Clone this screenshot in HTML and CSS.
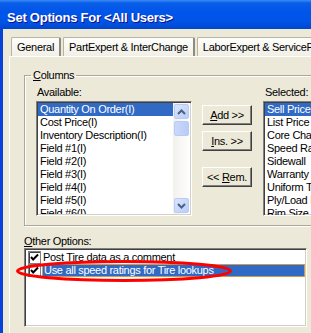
FILE: index.html
```html
<!DOCTYPE html>
<html lang="en">
<head>
  <meta charset="UTF-8">
  <title>Set Options For &lt;All Users&gt;</title>
  <link rel="stylesheet" href="styles.css">
</head>
<body>
  <div class="window">
    <div class="titlebar">Set Options For &lt;All Users&gt;</div>
    <div class="frame">
      <div class="tabs">
        <div class="tab">General</div>
        <div class="tab">PartExpert &amp; InterChange</div>
        <div class="tab">LaborExpert &amp; ServicePlus</div>
      </div>
      <div class="panel">
        <fieldset class="group">
          <legend><u>C</u>olumns</legend>
          <div class="columns">
            <div class="col-left">
              <div class="label">Available:</div>
              <div class="listbox avail">
                <div class="items">
                  <div class="item selected">Quantity On Order(I)</div>
                  <div class="item">Cost Price(I)</div>
                  <div class="item">Inventory Description(I)</div>
                  <div class="item">Field #1(I)</div>
                  <div class="item">Field #2(I)</div>
                  <div class="item">Field #3(I)</div>
                  <div class="item">Field #4(I)</div>
                  <div class="item">Field #5(I)</div>
                  <div class="item">Field #6(I)</div>
                </div>
                <div class="scrollbar">
                  <div class="sb-btn">
                    <svg width="9" height="6" viewBox="0 0 9 6"><polyline points="1,5 4.5,1.5 8,5" fill="none" stroke="#4d6185" stroke-width="2"/></svg>
                  </div>
                  <div class="sb-thumb"></div>
                  <div class="sb-track"></div>
                  <div class="sb-btn">
                    <svg width="9" height="6" viewBox="0 0 9 6"><polyline points="1,1 4.5,4.5 8,1" fill="none" stroke="#4d6185" stroke-width="2"/></svg>
                  </div>
                </div>
              </div>
            </div>
            <div class="col-buttons">
              <button class="btn"><u>A</u>dd &gt;&gt;</button>
              <button class="btn"><u>I</u>ns. &gt;&gt;</button>
              <button class="btn rem">&lt;&lt; <u>R</u>em.</button>
            </div>
            <div class="col-right">
              <div class="label sel">Selected:</div>
              <div class="listbox chosen">
                <div class="items">
                  <div class="item selected">Sell Price</div>
                  <div class="item">List Price</div>
                  <div class="item">Core Charge</div>
                  <div class="item">Speed Rating</div>
                  <div class="item">Sidewall</div>
                  <div class="item">Warranty</div>
                  <div class="item">Uniform Tread</div>
                  <div class="item">Ply/Load Range</div>
                  <div class="item">Rim Size</div>
                </div>
              </div>
            </div>
          </div>
        </fieldset>

        <div class="label other"><u>O</u>ther Options:</div>
        <div class="listbox options">
          <div class="option">
            <svg class="check" width="13" height="13" viewBox="0 0 13 13"><rect x="0.5" y="0.5" width="12" height="12" fill="#fff" stroke="#808080"/><path d="M1.5 12V1.5H12" fill="none" stroke="#404040"/><polyline points="3,6 5.2,8.5 10,3.5" fill="none" stroke="#000" stroke-width="2"/></svg>
            <span class="opt-text">Post Tire data as a comment</span>
          </div>
          <div class="option">
            <svg class="check" width="13" height="13" viewBox="0 0 13 13"><rect x="0.5" y="0.5" width="12" height="12" fill="#fff" stroke="#808080"/><path d="M1.5 12V1.5H12" fill="none" stroke="#404040"/><polyline points="3,6 5.2,8.5 10,3.5" fill="none" stroke="#000" stroke-width="2"/></svg>
            <span class="opt-text selected">Use all speed ratings for Tire lookups</span>
          </div>
        </div>

        <svg class="circle" width="220" height="28" viewBox="0 0 220 28">
          <ellipse cx="110" cy="15" rx="106.5" ry="9.5" fill="none" stroke="#f00" stroke-width="3"/>
        </svg>
      </div>
    </div>
  </div>
</body>
</html>
```

FILE: styles.css
```css
body {
  margin: 0;
  width: 311px;
  height: 333px;
  overflow: hidden;
  font-family: 'Liberation Sans', Arial, sans-serif;
  font-size: 11px;
  letter-spacing: -0.3px;
  color: #000;
  background-color: #ece9d8;
}

.window {
  width: 340px;
  height: 333px;
}

.titlebar {
  box-sizing: border-box;
  height: 29px;
  padding: 8px 0 0 7px;
  line-height: 19px;
  font-size: 13px;
  font-weight: bold;
  letter-spacing: -0.25px;
  color: #fff;
  text-shadow: 1px 1px #0f1089;
  background: linear-gradient(#3a8cf7 0, #0a5ee8 3px, #0055ea 12px, #0053e6 22px, #0148d0 28px);
}

.frame {
  box-sizing: border-box;
  height: 304px;
  border-left: 3px solid #0842d9;
  padding: 8px 0 0 6px;
  background-color: #ece9d8;
}

.tabs {
  display: flex;
  gap: 2px;
  margin-left: 2px;
  height: 19px;
}

.tab {
  box-sizing: border-box;
  height: 19px;
  padding: 0 5px;
  line-height: 18px;
  white-space: nowrap;
  border: 1px solid #b8b4a4;
  border-bottom: none;
  border-right: 2px solid #8e8b80;
  border-radius: 2px 2px 0 0;
  background: linear-gradient(#fdfdfb, #f1efe6);
}

.panel {
  position: relative;
  height: 276px;
  border-top: 1px solid #fff;
  border-left: 1px solid #fff;
  padding: 12px 0 0 14px;
}

.group {
  margin: 0;
  width: 320px;
  padding: 4px 0 9px 11px;
  border: 1px solid #aca899;
  box-shadow: inset 1px 1px #fff, 1px 1px #fff;
}

.group legend {
  margin-left: -5px;
  padding: 0 2px;
  line-height: 13px;
}

.columns {
  display: flex;
}

.label {
  line-height: 13px;
  padding-left: 1px;
  margin-bottom: 2px;
}

.label.sel {
  padding-left: 2px;
}

.listbox {
  box-sizing: border-box;
  border: 1px solid;
  border-color: #808080 #fff #fff #808080;
  box-shadow: inset 1px 1px #404040, inset -1px -1px #d4d0c8;
  padding: 1px;
  background-color: #fff;
  overflow: hidden;
}

.avail {
  display: flex;
  width: 156px;
  height: 115px;
}

.avail .items {
  width: 135px;
}

.chosen {
  width: 70px;
  height: 115px;
}

.items {
  overflow: hidden;
}

.item {
  height: 13px;
  line-height: 13px;
  padding-left: 2px;
  white-space: nowrap;
}

.item.selected {
  background-color: #316ac5;
  color: #fff;
}

.scrollbar {
  width: 17px;
  display: flex;
  flex-direction: column;
  align-items: center;
  background: linear-gradient(90deg, #f3f1ec, #fefefe);
}

.sb-btn {
  box-sizing: border-box;
  width: 15px;
  height: 15px;
  margin: 1px 0;
  display: flex;
  align-items: center;
  justify-content: center;
  border: 1px solid #b7cbf3;
  border-radius: 2px;
  background: linear-gradient(135deg, #dbe6fd, #b9cdf8);
}

.sb-thumb {
  box-sizing: border-box;
  width: 15px;
  height: 15px;
  margin-top: 1px;
  border: 1px solid #b7cbf3;
  border-radius: 2px;
  background: linear-gradient(90deg, #c9d8fc, #bacbf6);
}

.sb-track {
  flex: 1;
}

.col-buttons {
  display: flex;
  flex-direction: column;
  margin: 19px 0 0 10px;
  width: 50px;
}

.btn {
  box-sizing: border-box;
  width: 50px;
  height: 20px;
  margin: 0 0 6px;
  padding: 0;
  font-family: inherit;
  font-size: 11px;
  letter-spacing: -0.3px;
  color: #000;
  border: 1px solid;
  border-color: #fff #404040 #404040 #fff;
  box-shadow: inset -1px -1px #808080;
  background-color: #ece9d8;
}

.btn.rem {
  margin-top: 10px;
}

.col-right {
  margin-left: 11px;
}

.other {
  margin: 9px 0 0;
  padding-left: 0;
}

.options {
  width: 283px;
  height: 79px;
  padding: 2px 1px;
}

.option {
  display: flex;
  align-items: center;
  height: 13px;
  line-height: 13px;
}

.check {
  margin: 0 1px 0 2px;
  flex: none;
}

.opt-text {
  padding: 0 1px;
  white-space: nowrap;
}

.opt-text.selected {
  box-sizing: border-box;
  flex: 1;
  height: 13px;
  line-height: 11px;
  border: 1px solid #d09a4a;
  background-color: #316ac5;
  color: #fff;
}

.circle {
  position: absolute;
  left: 4px;
  top: 199px;
}
```
